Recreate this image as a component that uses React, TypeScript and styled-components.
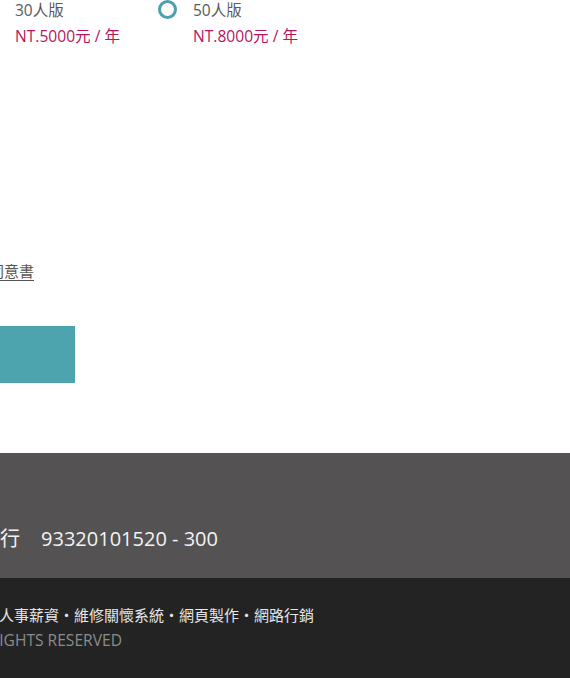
import React from "react";
import styled, { createGlobalStyle } from "styled-components";

const Global = createGlobalStyle`
  html, body { margin: 0; padding: 0; background: #fff; }
  body {
    font-family: "Open Sans", "Noto Sans CJK TC", sans-serif;
    overflow: hidden;
  }
`;

const Page = styled.div`
  width: 570px;
  height: 678px;
  overflow: hidden;
  display: flex;
  flex-direction: column;
`;

const Main = styled.main`
  display: flex;
  flex-direction: column;
  height: 453px;
`;

const PlanList = styled.div`
  display: flex;
  margin-left: -20px;
`;

const Plan = styled.label`
  width: 178px;
  display: grid;
  grid-template-columns: 19px auto;
  column-gap: 16px;
  row-gap: 6px;
  align-items: center;
`;

const Radio = styled.span`
  width: 19px;
  height: 19px;
  box-sizing: border-box;
  border: 3.5px solid #4d9fac;
  border-radius: 50%;
  margin-top: -1px;
`;

const PlanName = styled.span`
  font-size: 15.5px;
  line-height: 20px;
  color: #5a5a5a;
`;

const Price = styled.span`
  grid-column: 2;
  font-size: 15.6px;
  line-height: 20px;
  color: #b5165d;
  white-space: nowrap;
`;

const Clip = styled.div<{ $edge: number }>`
  width: ${(p) => p.$edge}px;
  display: flex;
  justify-content: flex-end;
  white-space: nowrap;
`;

const Agree = styled.div`
  margin-top: 215px;
  font-size: 15px;
  line-height: 20px;
  color: #555;
`;

const AgreeLink = styled.a`
  color: #555;
  text-decoration: underline;
  text-underline-offset: 3px;
`;

const SubmitRow = styled.div`
  margin-top: 45px;
  display: flex;
`;

const Submit = styled.button`
  width: 160px;
  height: 57px;
  margin-left: -85px;
  border: none;
  background: #4da3ae;
`;

const InfoBar = styled.section`
  height: 125px;
  background: #545252;
  display: flex;
  flex-direction: column;
  justify-content: flex-end;
  padding-bottom: 26px;
  box-sizing: border-box;
`;

const Info = styled.div`
  font-size: 20px;
  line-height: 26px;
  color: #f2f2f2;
`;

const Account = styled.span`
  margin-left: 21px;
`;

const Bottom = styled.footer`
  height: 100px;
  background: #232323;
  padding-top: 27px;
  box-sizing: border-box;
  display: flex;
  flex-direction: column;
  gap: 4px;
`;

const Services = styled.div`
  font-size: 15px;
  line-height: 21px;
  color: #e6e6e6;
`;

const Copy = styled.div`
  font-size: 15.6px;
  line-height: 21px;
  color: #8c8c8c;
`;

const plans = [
  { name: "30人版", price: "NT.5000元 / 年" },
  { name: "50人版", price: "NT.8000元 / 年" },
];

export default function App() {
  return (
    <Page>
      <Global />
      <Main>
        <PlanList>
          {plans.map((p) => (
            <Plan key={p.name}>
              <Radio />
              <PlanName>{p.name}</PlanName>
              <Price>{p.price}</Price>
            </Plan>
          ))}
        </PlanList>
        <Agree>
          <Clip $edge={34}>
            <span>
              我已詳細閱讀並同意<AgreeLink>個人資料使用同意書</AgreeLink>
            </span>
          </Clip>
        </Agree>
        <SubmitRow>
          <Submit aria-label="確認送出" />
        </SubmitRow>
      </Main>
      <InfoBar>
        <Info>
          <Clip $edge={218}>
            <span>匯款帳號：華南銀行</span>
            <Account>93320101520 - 300</Account>
          </Clip>
        </Info>
      </InfoBar>
      <Bottom>
        <Services>
          <Clip $edge={314}>網站設計・人事薪資・維修關懷系統・網頁製作・網路行銷</Clip>
        </Services>
        <Copy>
          <Clip $edge={122}>COPYRIGHT © 2024 ALL RIGHTS RESERVED</Clip>
        </Copy>
      </Bottom>
    </Page>
  );
}
